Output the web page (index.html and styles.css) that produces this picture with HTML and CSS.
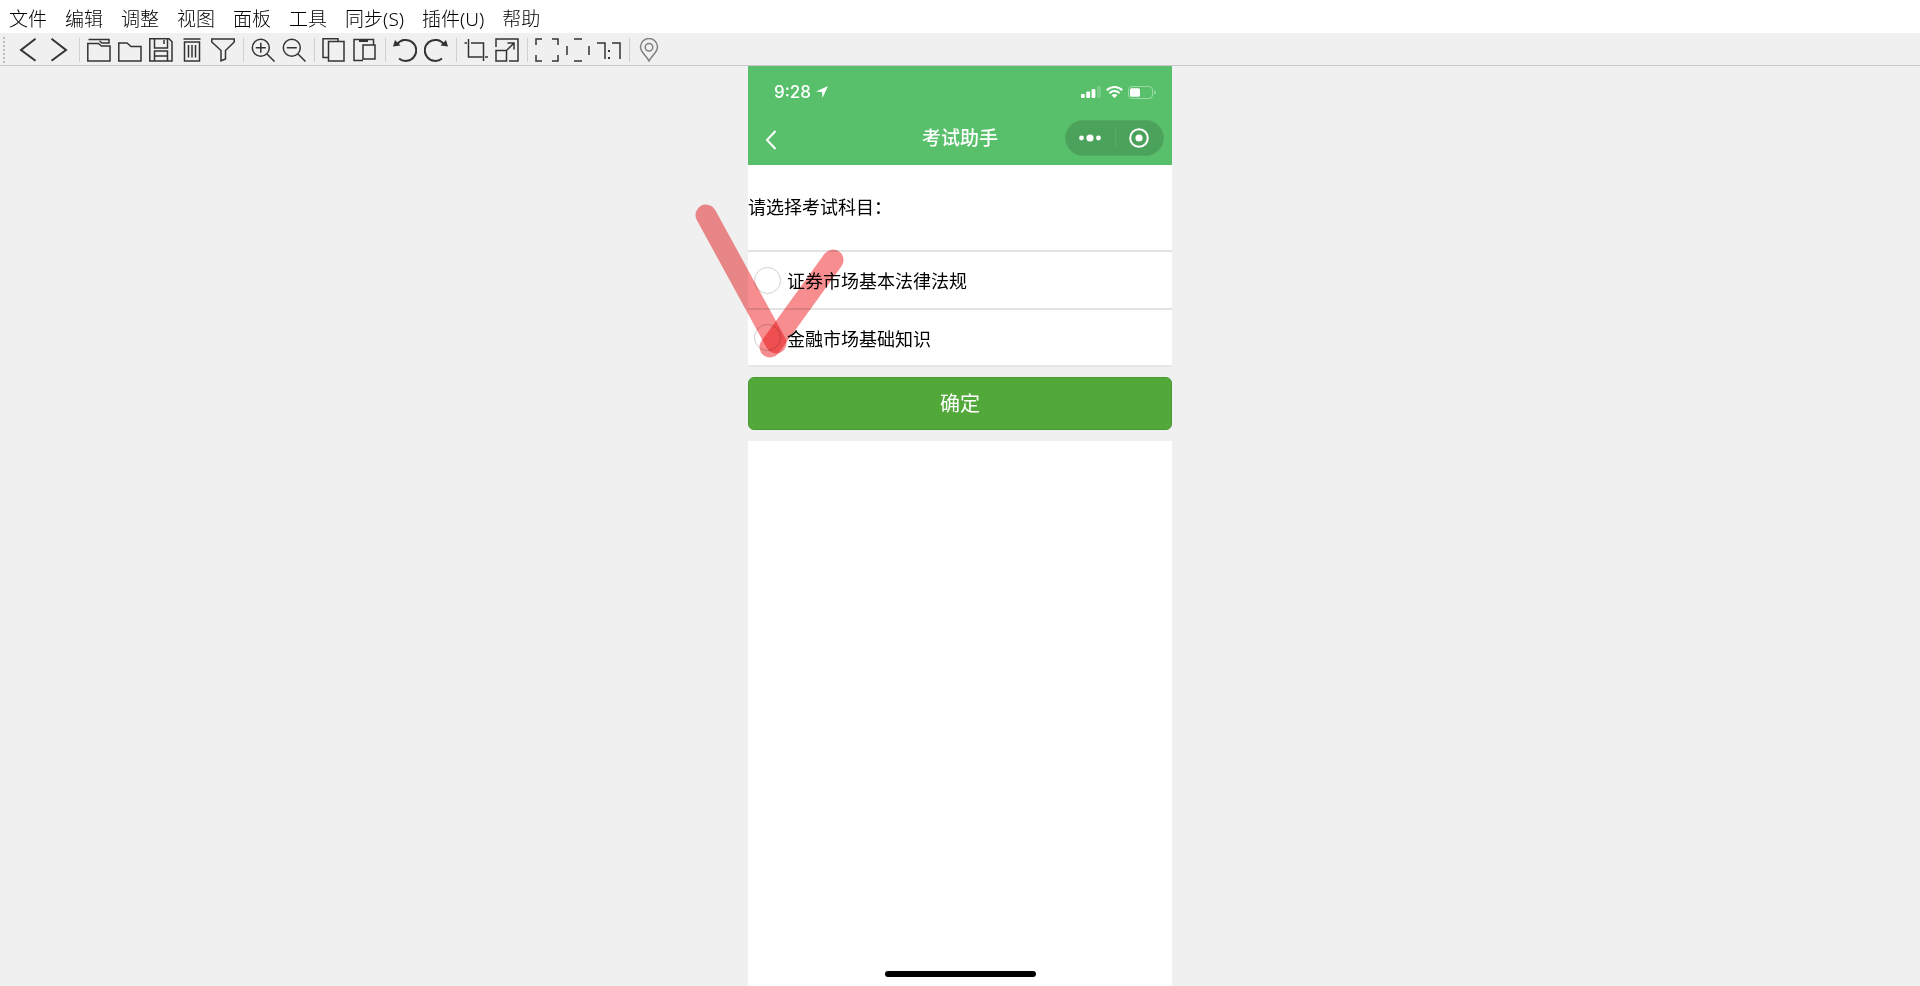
FILE: index.html
```
<!DOCTYPE html>
<html lang="zh-CN">
<head>
    <meta charset="UTF-8">
    <meta name="viewport" content="width=device-width, initial-scale=1.0">
    <title>考试助手</title>
    <link rel="stylesheet" href="styles.css">
</head>
<body>

<nav class="menubar">
    <button type="button">文件</button>
    <button type="button">编辑</button>
    <button type="button">调整</button>
    <button type="button">视图</button>
    <button type="button">面板</button>
    <button type="button">工具</button>
    <button type="button">同步(S)</button>
    <button type="button">插件(U)</button>
    <button type="button">帮助</button>
</nav>

<div class="toolbar">
    <span class="handle"></span>
    <button type="button" aria-label="上一张"><svg viewBox="0 0 24 24"><path class="bold" d="M19.500 .8L5 12l14.500 10.700"/></svg></button>
    <button type="button" aria-label="下一张"><svg viewBox="0 0 24 24"><path class="bold" d="M4.500 .8L19 12 4.500 22.700"/></svg></button>
    <span class="separator"></span>
    <button type="button" aria-label="打开文件"><svg viewBox="0 0 24 24"><path d="M.8 23V5.500h10.700l3 2.500H23v15zM1.500 1.500H22V5h-7l-2.500-2"/></svg></button>
    <button type="button" aria-label="打开文件夹"><svg viewBox="0 0 24 24"><path d="M.8 23V5h8.200l4 3.500h10V23z"/></svg></button>
    <button type="button" aria-label="保存"><svg viewBox="0 0 24 24"><path d="M.8.800H20l3 3V23H.8zM5.500 1v9h13V1M15 2v4M5.500 23V13h13v10M5.500 18h13"/></svg></button>
    <button type="button" aria-label="删除"><svg viewBox="0 0 24 24"><path d="M3.500 1h17M4.500 4h15v19h-15zM8.500 7v12.500M12 7v12.500M15.500 7v12.500"/></svg></button>
    <button type="button" aria-label="筛选"><svg viewBox="0 0 24 24"><path d="M.8 1h22.400v3l-8.700 8.500V21L10 22.800V12.500L.8 4z"/></svg></button>
    <span class="separator"></span>
    <button type="button" aria-label="放大"><svg viewBox="0 0 24 24"><circle cx="9.800" cy="9.800" r="8.500"/><path d="M16 16l7.500 7.500M4.800 9.800h10M9.800 4.800v10"/></svg></button>
    <button type="button" aria-label="缩小"><svg viewBox="0 0 24 24"><circle cx="9.800" cy="9.800" r="8.500"/><path d="M16 16l7.500 7.500M4.800 9.800h10"/></svg></button>
    <span class="separator"></span>
    <button type="button" aria-label="复制"><svg viewBox="0 0 24 24"><path d="M6.500 3.500H22V23H6.500zM6 19.500H1V.8h15v2.500"/></svg></button>
    <button type="button" aria-label="粘贴"><svg viewBox="0 0 24 24"><path d="M10 22.500H1V1.500h19.500V7M10 7h12v14H10z"/><path class="solid" d="M6 1h9v3H6z"/></svg></button>
    <span class="separator"></span>
    <button type="button" aria-label="向左旋转"><svg viewBox="0 0 24 24"><path class="bold" d="M4 6.500a10.500 10.500 0 1 1 2 14"/><path class="solid" d="M0 8.500L2 2l5.500 5.500z"/></svg></button>
    <button type="button" aria-label="向右旋转"><svg viewBox="0 0 24 24"><path class="bold" d="M20 6.500a10.500 10.500 0 1 0-2 14"/><path class="solid" d="M24 8.500L22 2l-5.500 5.500z"/></svg></button>
    <span class="separator"></span>
    <button type="button" aria-label="裁剪"><svg viewBox="0 0 24 24"><path d="M4.500 1v18h14M7 5h12.500v18M.5 5H3M21 19h3"/></svg></button>
    <button type="button" aria-label="调整大小"><svg viewBox="0 0 24 24"><path d="M1 9V1h22v22h-9M1 12.500h10.500V23H1zM11 13l8-8M12.500 5H19v6.500"/></svg></button>
    <span class="separator"></span>
    <button type="button" aria-label="适应窗口"><svg viewBox="0 0 24 24"><path d="M1 7V1h6M17 1h6v6M23 17v6h-6M7 23H1v-6"/></svg></button>
    <button type="button" aria-label="全屏"><svg viewBox="0 0 24 24"><path d="M8 1h8M8 23h8M1 8v9M23 8v9"/></svg></button>
    <button type="button" aria-label="原始大小"><svg viewBox="0 0 24 24"><path d="M0 5h8v16M15 5h8v16"/><path class="solid" d="M11 12h2v2h-2zM11 19h2v2h-2z"/></svg></button>
    <span class="separator"></span>
    <button type="button" class="muted" aria-label="位置"><svg viewBox="0 0 24 24"><path d="M12 23C9 17 3.500 14.500 3.500 9a8.500 8.500 0 0 1 17 0c0 5.500-5.500 8-8.500 14z"/><circle cx="12" cy="9.300" r="3.800"/></svg></button>
</div>

<main class="viewer">
    <div class="phone">
        <header>
            <div class="status">
                <span class="time">9:28</span>
                <svg class="arrow" width="12" height="12" viewBox="0 0 12 12"><path d="M12 0L0 5.500l6 .5.500 6z"/></svg>
                <svg class="signal" width="20" height="12" viewBox="0 0 20 12"><rect y="8" width="3.800" height="4" rx="1"/><rect x="5.300" y="5.500" width="3.800" height="6.500" rx="1"/><rect x="10.600" y="3" width="3.800" height="9" rx="1"/><rect x="16" width="3.800" height="12" rx="1" opacity=".2"/></svg>
                <svg width="17" height="12" viewBox="0 0 17 12"><path class="wave" d="M.8 4.300a10.800 10.800 0 0 1 15.400 0M3.500 7.200a7 7 0 0 1 10 0"/><path d="M5.600 9.200a4.300 4.300 0 0 1 5.800 0l-2.900 2.800z"/></svg>
                <svg width="28" height="13" viewBox="0 0 28 13"><rect class="case" x=".5" y=".5" width="24" height="12" rx="3.500"/><rect x="2" y="2.300" width="10" height="8.400" rx="1.500"/><path d="M26 4.500q2 .5 2 2t-2 2z" opacity=".4"/></svg>
            </div>
            <div class="titlebar">
                <button type="button" class="back" aria-label="返回"><svg width="12" height="20" viewBox="0 0 12 20"><path d="M10.500 1L2 10l8.500 9"/></svg></button>
                <h1>考试助手</h1>
                <div class="capsule">
                    <button type="button" aria-label="更多"><svg width="22" height="8" viewBox="0 0 22 8"><circle cx="2.500" cy="4" r="2.400"/><circle cx="11" cy="4" r="3.600"/><circle cx="19.500" cy="4" r="2.400"/></svg></button>
                    <button type="button" aria-label="关闭"><svg width="20" height="20" viewBox="0 0 20 20"><circle class="ring" cx="10" cy="10" r="8.800"/><circle cx="10" cy="10" r="3.600"/></svg></button>
                </div>
            </div>
        </header>

        <form id="subjectForm">
            <p class="prompt">请选择考试科目：</p>
            <div class="options">
                <label class="option"><input type="radio" name="subject" value="law">证券市场基本法律法规</label>
                <label class="option"><input type="radio" name="subject" value="finance">金融市场基础知识</label>
            </div>
            <button type="submit" class="confirm">确定</button>
        </form>

        <div class="blank">
            <span class="home-bar"></span>
        </div>

        <svg class="mark" width="160" height="170" viewBox="0 0 160 170"><path d="M14 15l70 128"/><path d="M141 60L78 147"/></svg>
    </div>
</main>

</body>
</html>
```
FILE: styles.css
```
* {
    box-sizing: border-box;
}
body {
    display: flex;
    flex-direction: column;
    min-height: 100vh;
    margin: 0;
    background-color: #f0f0f0;
    color: #000;
    font-family: "Open Sans", "Noto Sans CJK SC", sans-serif;
}
button {
    padding: 0;
    border: none;
    background: none;
    color: inherit;
    font: inherit;
}
svg {
    display: block;
}
.menubar {
    display: flex;
    gap: 18px;
    height: 33px;
    padding: 4px 9px 0;
    background-color: white;
    font-family: "Noto Sans", "Noto Sans CJK SC", sans-serif;
    font-size: 19px;
    font-weight: 300;
    line-height: 28px;
    white-space: nowrap;
}
.toolbar {
    display: flex;
    align-items: center;
    gap: 7px;
    height: 33px;
    padding: 2px 0 0 3px;
    border-bottom: 1px solid #c8c8c8;
}
.toolbar button {
    width: 24px;
    height: 24px;
}
.toolbar svg {
    width: 24px;
    height: 24px;
    fill: none;
    stroke: #333;
    stroke-width: 1.5;
}
.toolbar .bold {
    stroke-width: 2;
}
.toolbar .solid {
    fill: #333;
    stroke: none;
}
.toolbar .muted svg {
    stroke: #808080;
}
.handle {
    width: 2px;
    height: 26px;
    margin-right: 4px;
    background: repeating-linear-gradient(#bbb 0 2px, transparent 2px 4px);
}
.separator {
    width: 2px;
    height: 24px;
    border-right: 1px solid #d0d0d0;
}
.viewer {
    display: flex;
    flex: 1;
    justify-content: center;
}
.phone {
    position: relative;
    display: flex;
    flex-direction: column;
    width: 424px;
    max-width: 100%;
}
header {
    padding-bottom: 9px;
    background-color: #58c06b;
    color: white;
}
.status {
    display: flex;
    align-items: center;
    gap: 5px;
    height: 54px;
    padding: 0 16px 2px 26px;
    fill: white;
}
.time {
    font-family: Inter, sans-serif;
    font-size: 17px;
    font-weight: 500;
}
.arrow {
    margin-top: -1px;
}
.signal {
    margin-left: auto;
}
.wave,
.case {
    fill: none;
    stroke: white;
    stroke-width: 2;
}
.case {
    stroke-width: 1;
    stroke-opacity: 0.4;
}
.titlebar {
    display: grid;
    grid-template-columns: 1fr auto 1fr;
    align-items: center;
    padding: 0 8px 0 17px;
}
.back {
    justify-self: start;
    padding-top: 3px;
}
.back svg {
    fill: none;
    stroke: white;
    stroke-width: 2;
}
h1 {
    margin: 0;
    padding-right: 9px;
    font-size: 19px;
    font-weight: 500;
    line-height: 28px;
}
.capsule {
    display: flex;
    justify-self: end;
    width: 99px;
    height: 36px;
    border: 1px solid #52a862;
    border-radius: 18px;
    background-color: #4ba25b;
    fill: white;
}
.capsule button {
    display: flex;
    flex: 1;
    align-items: center;
    justify-content: center;
}
.capsule button + button {
    position: relative;
}
.capsule button + button::before {
    content: "";
    position: absolute;
    left: 0;
    height: 20px;
    border-left: 1px solid #57aa66;
}
.ring {
    fill: none;
    stroke: white;
    stroke-width: 2;
}
.prompt {
    margin: 0;
    padding: 28px 0 29px;
    background-color: white;
    font-size: 18px;
    line-height: 28px;
}
.options {
    border-bottom: 2px solid #e6e6e6;
}
.option {
    display: flex;
    align-items: center;
    gap: 6px;
    height: 58px;
    padding-left: 6px;
    border-top: 2px solid #e3e3e3;
    background-color: white;
    font-size: 18px;
}
.option + .option {
    height: 57px;
}
.option input {
    width: 27px;
    height: 27px;
    margin: 0;
    border: 1px solid #d0d0d0;
    border-radius: 50%;
    background-color: white;
    appearance: none;
}
.option input:checked {
    border: 8px solid #52a939;
}
.confirm {
    display: block;
    width: 100%;
    height: 53px;
    margin: 10px 0 11px;
    border: 1px solid #4a9a34;
    border-radius: 6px;
    background-color: #52a939;
    color: white;
    font-size: 20px;
    line-height: 28px;
}
.blank {
    display: flex;
    flex: 1;
    align-items: flex-end;
    justify-content: center;
    padding-bottom: 9px;
    background-color: white;
}
.home-bar {
    width: 151px;
    height: 6px;
    border-radius: 3px;
    background-color: black;
}
/* red check drawn over the photo */
.mark {
    position: absolute;
    top: 134px;
    left: -56px;
    fill: none;
    stroke: #f78d8f;
    stroke-width: 21;
    stroke-linecap: round;
    pointer-events: none;
}
.mark,
.mark path {
    mix-blend-mode: multiply;
}
```
